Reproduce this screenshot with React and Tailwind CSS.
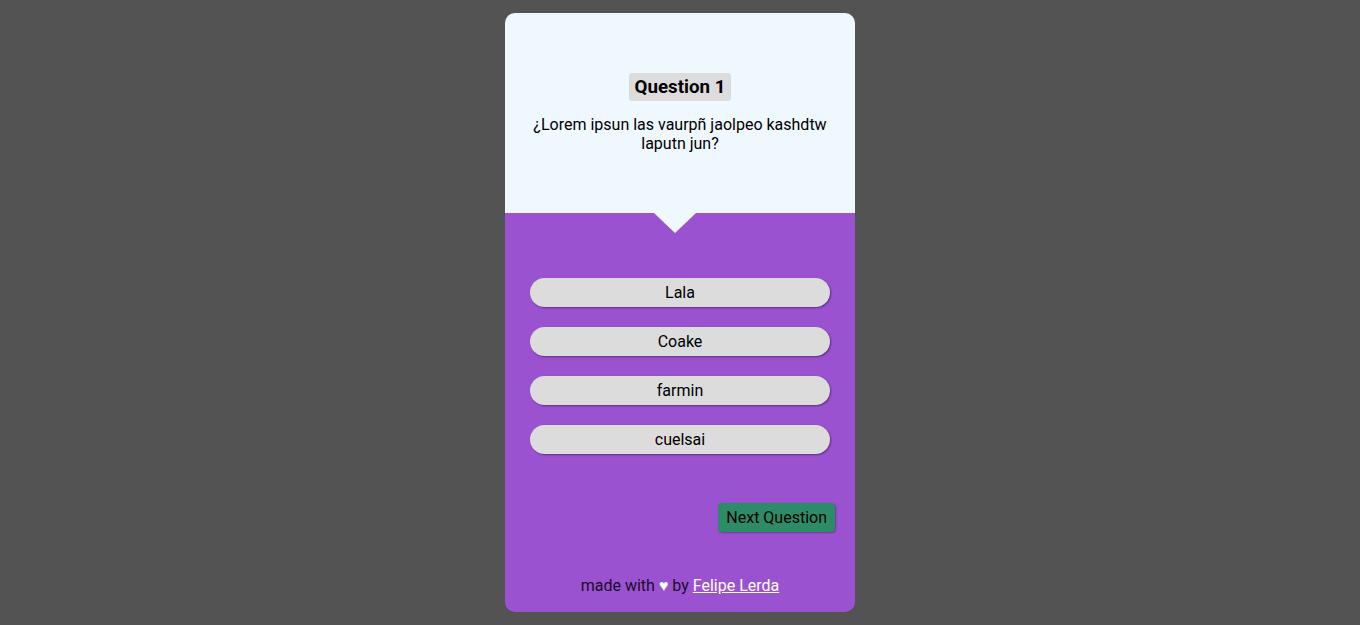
export default function App() {
  const answers = ["Lala", "Coake", "farmin", "cuelsai"];
  return (
    <div className="w-full h-[625px] bg-[#535353] flex items-center justify-center" style={{ fontFamily: "Roboto, 'Liberation Sans', sans-serif" }}>
      <div className="w-[350px] h-[599px] rounded-[10px] overflow-hidden bg-[#9b52d1] flex flex-col">
        <div className="h-[200px] bg-[#f0f8ff] flex flex-col items-center justify-center px-6 text-center">
          <div className="bg-[#dcdcdc] rounded-[3px] px-[6px] py-[3px] text-[18.72px] leading-[22px] font-bold text-black">Question 1</div>
          <p className="mt-[14px] text-[16px] leading-[19px] text-black">¿Lorem ipsun las vaurpñ jaolpeo kashdtw laputn jun?</p>
        </div>
        <div className="relative flex-1 flex flex-col">
          <div className="absolute left-[149px] top-0 w-0 h-0 border-l-[21.5px] border-r-[21.5px] border-t-[20px] border-l-transparent border-r-transparent border-t-[#f0f8ff]"></div>
          <div className="pt-[65px] flex flex-col items-center gap-5">
            {answers.map((a) => (
              <button key={a} className="w-[300px] h-[29px] rounded-full bg-[#dcdcdc] text-[16px] text-black shadow-[1px_1px_2px_rgba(0,0,0,0.4)]">{a}</button>
            ))}
          </div>
          <div className="flex justify-end pr-5 mt-[49px]">
            <button className="h-[29px] px-[8px] rounded-[4px] bg-[#2e8b67] text-[16px] text-black shadow-[1px_1px_2px_rgba(0,0,0,0.3)]">Next Question</button>
          </div>
          <div className="mt-[44px] text-center text-[16px] leading-[19px] text-[#1a0a2a]">
            made with <span className="text-white">♥</span> by <a href="#" className="text-white underline">Felipe Lerda</a>
          </div>
        </div>
      </div>
    </div>
  );
}
